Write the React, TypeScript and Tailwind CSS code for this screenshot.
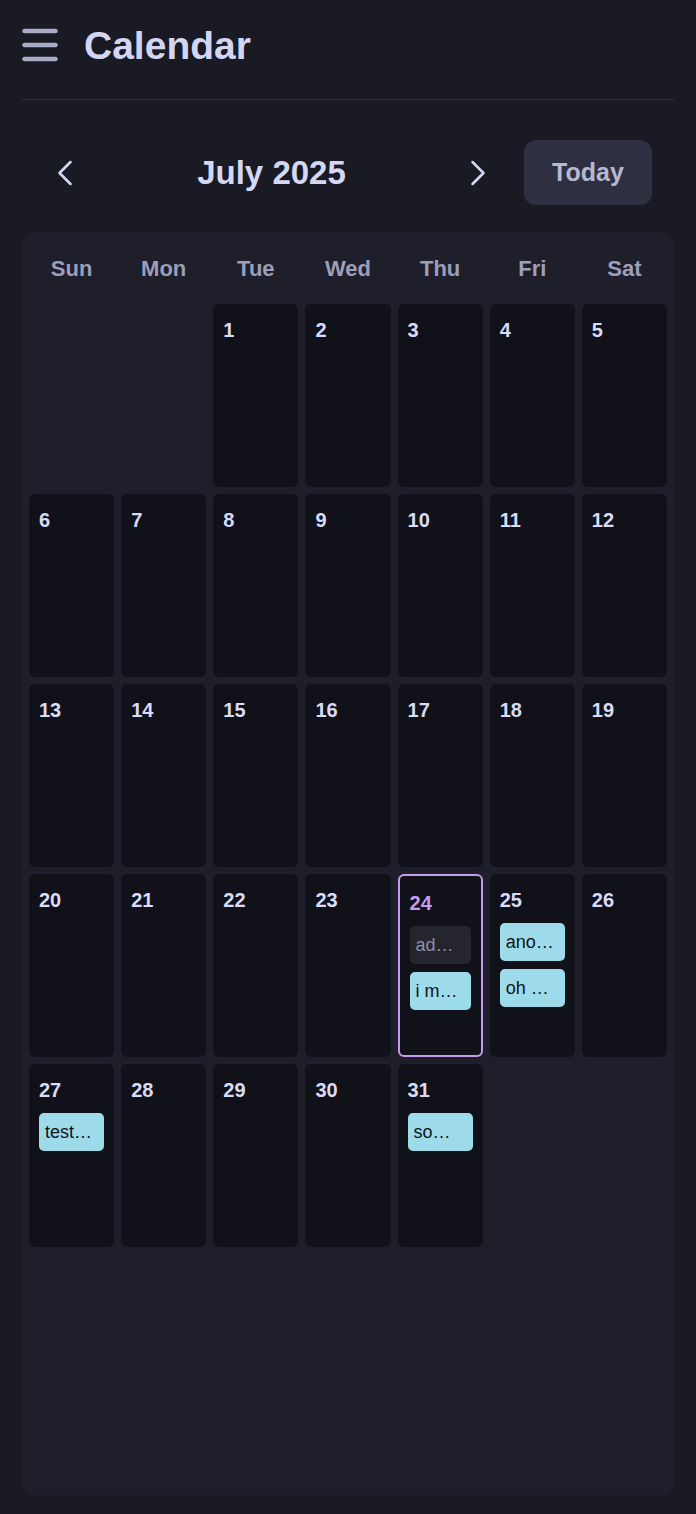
import React from "react";

type Ev = { label: string; muted?: boolean };

const events: Record<number, Ev[]> = {
    24: [{ label: "ad…", muted: true }, { label: "i m…" }],
    25: [{ label: "ano…" }, { label: "oh …" }],
    27: [{ label: "test…" }],
    31: [{ label: "so…" }],
};

const days = ["Sun", "Mon", "Tue", "Wed", "Thu", "Fri", "Sat"];

const Chevron = ({ dir }: { dir: "left" | "right" }) => (
    <svg
        width="44"
        height="44"
        viewBox="0 0 24 24"
        fill="none"
        stroke="currentColor"
        strokeWidth="1.4"
        strokeLinecap="round"
        strokeLinejoin="round"
    >
        {dir === "left" ? <path d="m15 18-6-6 6-6" /> : <path d="m9 18 6-6-6-6" />}
    </svg>
);

const DayCell = ({ day }: { day: number | null }) => {
    if (day === null) return <div className="h-[183px]" />;
    const isToday = day === 24;
    return (
        <div
            className={
                isToday
                    ? "h-[183px] rounded-[6px] bg-[#111119] border-2 border-[#c59ceb] px-[10px] pt-[15px] flex flex-col"
                    : "h-[183px] rounded-[6px] bg-[#111119] px-[10px] pt-[14px] flex flex-col"
            }
        >
            <div
                className={
                    isToday
                        ? "text-[20px] leading-6 font-bold text-[#c69cf0]"
                        : "text-[20px] leading-6 font-bold text-[#d9dbf7]"
                }
            >
                {day}
            </div>
            <div className="mt-[11px] flex flex-col gap-[8px]">
                {(events[day] || []).map((ev, i) => (
                    <div
                        key={i}
                        className={
                            ev.muted
                                ? "h-[38px] rounded-[5px] bg-[#25252f] text-[#8d8fa4] px-[6px] pt-[1px] flex items-center text-[18px] whitespace-nowrap overflow-hidden"
                                : "h-[38px] rounded-[5px] bg-[#9ddbea] text-[#111318] px-[6px] pt-[1px] flex items-center text-[18px] whitespace-nowrap overflow-hidden"
                        }
                    >
                        {ev.label}
                    </div>
                ))}
            </div>
        </div>
    );
};

export default function App() {
    const cells: (number | null)[] = [null, null];
    for (let d = 1; d <= 31; d++) cells.push(d);
    while (cells.length % 7 !== 0) cells.push(null);

    return (
        <div
            className="min-h-screen bg-[#1a1a25] px-[22px] pb-[19px]"
            style={{ fontFamily: '"Liberation Sans", Arial, sans-serif' }}
        >
            <div className="pt-[16px] pb-[25px] border-b border-[#2e2e3d]">
                <div className="h-[58px] flex items-center gap-[26px]">
                    <svg width="36" height="34" viewBox="0 0 36 34" className="text-[#a9acc6]">
                        <line x1="2.5" y1="3" x2="33.5" y2="3" stroke="currentColor" strokeWidth="4.5" strokeLinecap="round" />
                        <line x1="2.5" y1="17" x2="33.5" y2="17" stroke="currentColor" strokeWidth="4.5" strokeLinecap="round" />
                        <line x1="2.5" y1="31" x2="33.5" y2="31" stroke="currentColor" strokeWidth="4.5" strokeLinecap="round" />
                    </svg>
                    <h1 className="text-[39px] font-bold text-[#d2d6f2] pt-[2px]">Calendar</h1>
                </div>
            </div>

            <div className="mt-[40px] flex items-center h-[65px] pl-[21px] pr-[22px]">
                <button className="w-[44px] h-[44px] flex items-center justify-center text-[#d2d6f2]">
                    <Chevron dir="left" />
                </button>
                <div className="flex-1 text-center text-[33px] font-bold text-[#d4d8f2]">July 2025</div>
                <button className="w-[44px] h-[44px] flex items-center justify-center text-[#d2d6f2]">
                    <Chevron dir="right" />
                </button>
                <button className="ml-[24px] w-[128px] h-[65px] rounded-[12px] bg-[#2f2f42] text-[25px] font-bold text-[#b6b9d2]">
                    Today
                </button>
            </div>

            <div className="mt-[27px] h-[1263px] rounded-[12px] bg-[#1f1f2c] p-[7px]">
                <div className="grid grid-cols-7 gap-[7px] h-[58px] items-center">
                    {days.map((d) => (
                        <div key={d} className="text-center text-[22px] font-bold text-[#9c9eba]">
                            {d}
                        </div>
                    ))}
                </div>
                <div className="mt-[7px] grid grid-cols-7 gap-[7px]">
                    {cells.map((d, i) => (
                        <DayCell key={i} day={d} />
                    ))}
                </div>
            </div>
        </div>
    );
}
